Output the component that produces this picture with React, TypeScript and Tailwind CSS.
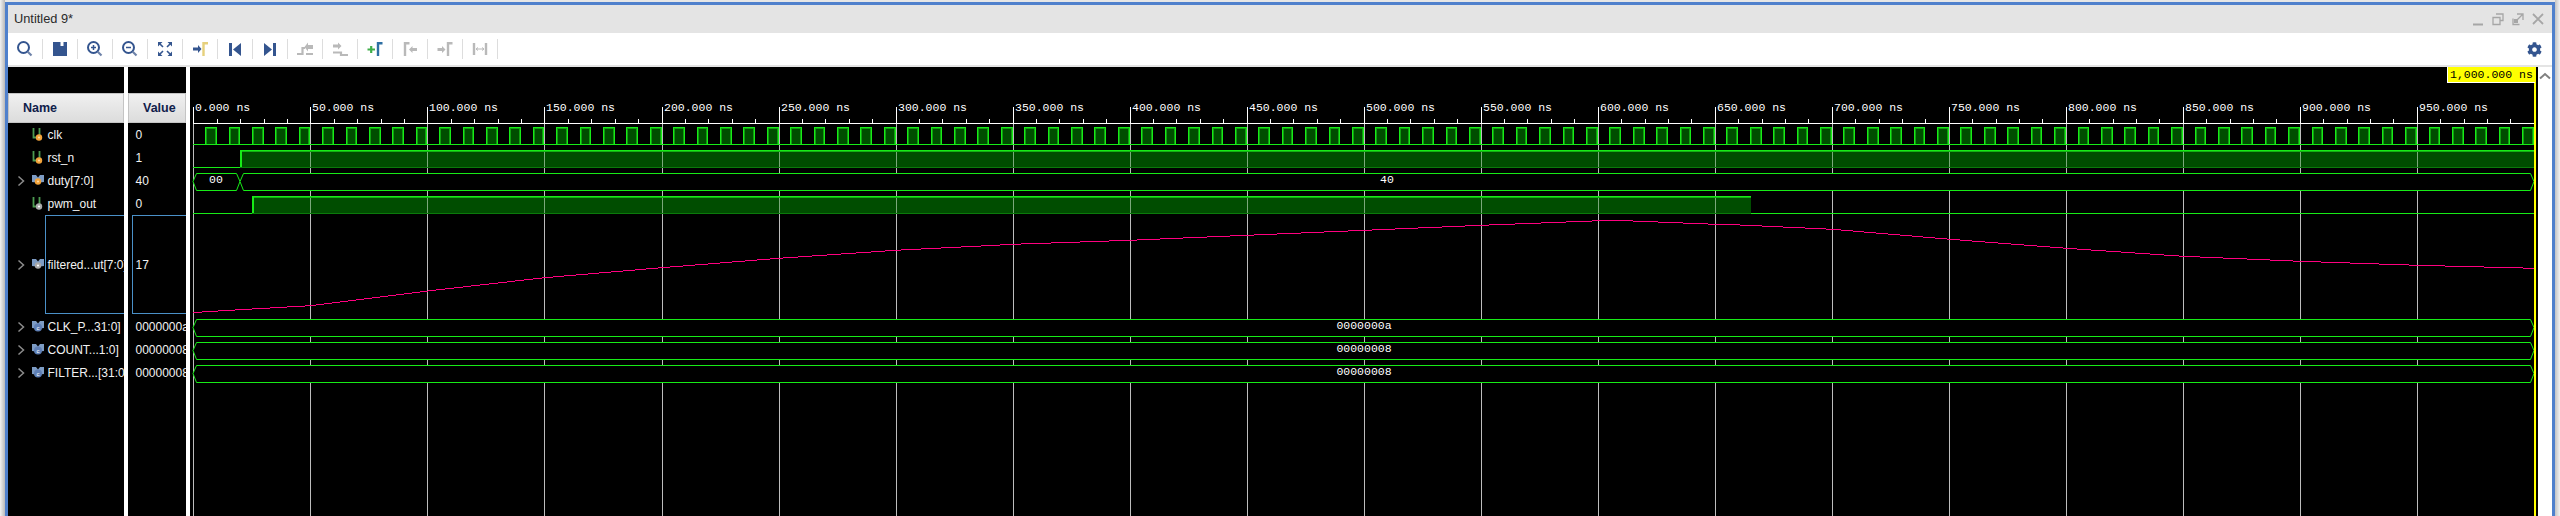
import React from "react";
import { FaCog } from "react-icons/fa";

const NAVY = "#34558f";
const OFF = "#b9b9b9";
const GREEN = "#17eb17";
const FILL = "#004d00";
const PINK = "#ff0080";

const X0 = 193.4;
const PX_PER_NS = 2.3405;
const END = 2534;
const nsX = (ns: number) => Math.round(X0 + ns * PX_PER_NS);

// measured off the reference, screen px
const trace: [number, number][] = [
  [193, 312.5], [246, 309.3], [310, 305.7], [427, 291], [544, 277.7], [661, 267.7],
  [778, 258.3], [895, 250.3], [990, 245.5], [1012, 244.3], [1129, 240.3], [1246, 235.3],
  [1364, 230.3], [1481, 225.3], [1599, 220.7], [1612, 220.3], [1625, 220.7], [1715, 224.3],
  [1740, 225], [1832, 229.3], [1950, 239.3], [2066, 248.3], [2183, 256.3], [2300, 261.3],
  [2417, 265.3], [2534, 268.3],
];

function traceRuns() {
  const runs: { x: number; w: number; y: number }[] = [];
  let seg = 0;
  for (let x = 193; x < END; x++) {
    while (seg < trace.length - 2 && x > trace[seg + 1][0]) seg++;
    const [ax, ay] = trace[seg];
    const [bx, by] = trace[seg + 1];
    const y = Math.round(ay + ((x - ax) / (bx - ax)) * (by - ay) - 0.5);
    const last = runs[runs.length - 1];
    if (last && last.y === y) last.w++;
    else runs.push({ x, w: 1, y });
  }
  return runs;
}

const Icon = ({ children }: { children: React.ReactNode }) => (
  <svg width="18" height="18" viewBox="0 0 18 18" fill="none">
    {children}
  </svg>
);

const Lens = ({ mark }: { mark?: "plus" | "minus" }) => (
  <Icon>
    <circle cx="7.5" cy="7.5" r="5.5" stroke={NAVY} strokeWidth="2" />
    <path d="M11.5 11.5 15.5 15.5" stroke="#6d82a8" strokeWidth="2.2" />
    {mark && <path d="M5 7.5H10" stroke={NAVY} strokeWidth="1.5" />}
    {mark === "plus" && <path d="M7.5 5V10" stroke={NAVY} strokeWidth="1.5" />}
  </Icon>
);

const toolbar: React.ReactNode[] = [
  <Lens />,
  <Icon>
    <path d="M2 2H9.5V6H12.5V2H16V16H2Z" fill={NAVY} />
  </Icon>,
  <Lens mark="plus" />,
  <Lens mark="minus" />,
  <Icon>
    <path d="M2 2H6.5L2 6.5ZM16 2V6.5L11.5 2ZM2 16V11.500L6.5 16ZM16 16H11.5L16 11.5Z" fill={NAVY} />
    <path d="M4 4 7 7M14 4 11 7M4 14 7 11M14 14 11 11" stroke={NAVY} strokeWidth="1.6" />
  </Icon>,
  <Icon>
    <path d="M2 7.500H7V5L10.500 9 7 13V10.500H2Z" fill={NAVY} />
    <path d="M12.500 16V3.200H17" stroke="#e6d07c" strokeWidth="2.400" />
  </Icon>,
  <Icon>
    <path d="M3 3H6V16H3ZM15 3V16L7 9.500Z" fill={NAVY} />
  </Icon>,
  <Icon>
    <path d="M12 3H15V16H12ZM3 3V16L11 9.500Z" fill={NAVY} />
  </Icon>,
  <Icon>
    <path d="M1 14H6.500V8H9" stroke={OFF} strokeWidth="2.200" />
    <path d="M17 5V9H12V11.500L8.500 7 12 2.500V5Z" fill={OFF} />
    <path d="M10 13H17V15H10Z" fill={OFF} />
  </Icon>,
  <Icon>
    <path d="M2 4.500H7V2.500L10.500 6 7 9.500V7.500H2Z" fill={OFF} />
    <path d="M2 12.500H10V15H17" stroke={OFF} strokeWidth="2.200" />
  </Icon>,
  <Icon>
    <path d="M1.500 9.500H9M5.200 6V13" stroke="#3fae49" strokeWidth="2.200" />
    <path d="M12 16V3.200H16.500" stroke="#2d6fa3" strokeWidth="2.400" />
  </Icon>,
  <Icon>
    <path d="M4 16V3.200H8.500" stroke={OFF} strokeWidth="2.400" />
    <path d="M16 8H11.500V6L8 9.500 11.500 13V11H16Z" fill={OFF} />
  </Icon>,
  <Icon>
    <path d="M1.500 8H6V6L9.500 9.500 6 13V11H1.500Z" fill={OFF} />
    <path d="M12 16V3.200H16.500" stroke={OFF} strokeWidth="2.400" />
  </Icon>,
  <Icon>
    <path d="M3 3V15M15 3V15" stroke={OFF} strokeWidth="2.400" />
    <path d="M5 9H13M5 9 7 7.500M5 9 7 10.500M13 9 11 7.500M13 9 11 10.500" stroke={OFF} strokeWidth="1" />
  </Icon>,
];

type Kind = "bit" | "bus" | "busOut" | "bitOut" | "const";

function SignalIcon({ kind }: { kind: Kind }) {
  const dot = kind === "bit" || kind === "bus" ? "#f2a33a" : kind === "const" ? "#5f7fb5" : "#a9a9a9";
  const isBit = kind === "bit" || kind === "bitOut";
  return (
    <svg className="shrink-0" width="14" height="16" viewBox="0 0 14 16" fill="none">
      {isBit ? (
        <path d="M2.500 1V10.500H8.500V1" stroke="#4c9a50" strokeWidth="1.800" />
      ) : (
        <path d="M1 2H5L7 4.500 9 2H13V9L9 9.500 7 7 5 9.500 1 9Z" fill="#7d9cc4" />
      )}
      <circle cx={isBit ? 8 : 7} cy={isBit ? 10.500 : 8.500} r={kind === "const" ? 4 : 3.200} fill={dot} />
      {kind === "const" ? (
        <text x="7" y="10.500" fontSize="6" fontFamily="Liberation Sans" fill="#fff" textAnchor="middle">
          c
        </text>
      ) : (
        <circle cx={isBit ? 8 : 7} cy={isBit ? 10.500 : 8.500} r="1.100" fill={kind === "bit" || kind === "bus" ? "#ffd9a0" : "#fff"} />
      )}
    </svg>
  );
}

const signals: { name: string; value: string; kind: Kind; bus?: boolean; tall?: boolean }[] = [
  { name: "clk", value: "0", kind: "bit" },
  { name: "rst_n", value: "1", kind: "bit" },
  { name: "duty[7:0]", value: "40", kind: "bus", bus: true },
  { name: "pwm_out", value: "0", kind: "bitOut" },
  { name: "filtered...ut[7:0]", value: "17", kind: "busOut", bus: true, tall: true },
  { name: "CLK_P...31:0]", value: "0000000a", kind: "const", bus: true },
  { name: "COUNT...1:0]", value: "00000008", kind: "const", bus: true },
  { name: "FILTER...[31:0]", value: "00000008", kind: "const", bus: true },
];

const HeaderCell = ({ label, className }: { label: string; className: string }) => (
  <div className={`h-[30px] flex items-center bg-gradient-to-b from-[#f0f0f0] to-[#dcdcdc] border border-[#c4c4c4] text-[12.5px] font-bold text-[#10204a] ${className}`}>
    {label}
  </div>
);

function Bus({ y, from, to, label, labelX }: { y: number; from: number; to: number; label?: string; labelX: number }) {
  const b = y + 17;
  const m = y + 8.5;
  return (
    <g>
      <path
        d={`M${from + 3.500} ${y + 0.5}H${to - 3.500}L${to} ${m}L${to - 3.500} ${b + 0.5}H${from + 3.500}L${from} ${m}Z`}
        fill="#000"
        stroke={GREEN}
        strokeWidth="1"
      />
      {label && (
        <text x={labelX} y={y + 10} fontSize="11.500" fontFamily="Liberation Mono" fill="#fff" textAnchor="middle">
          {label}
        </text>
      )}
    </g>
  );
}

function Level({ from, to, top, bottom, grid }: { from: number; to: number; top: number; bottom: number; grid: number[] }) {
  return (
    <g shapeRendering="crispEdges">
      <rect x={from} y={top} width={to - from} height={bottom - top} fill={FILL} />
      <rect x={from} y={top} width={to - from} height={2} fill={GREEN} />
      <rect x={from} y={top + 1} width={to - from} height={1} fill="#12b012" />
      <rect x={from} y={top} width={2} height={bottom - top} fill={GREEN} />
      <rect x={from} y={bottom - 1} width={to - from} height={1} fill="#0b7a0b" />
      {grid
        .filter((x) => x > from && x < to)
        .map((x) => (
          <rect key={x} x={x} y={top + 2} width={1} height={bottom - top - 3} fill="#7aa87a" />
        ))}
    </g>
  );
}

function Waves() {
  const majors = Array.from({ length: 20 }, (_, i) => i * 50);
  const minors = Array.from({ length: 100 }, (_, i) => i * 10).filter((n) => n % 50 !== 0);
  const grid = majors.map(nsX);
  const pulses = Array.from({ length: 100 }, (_, i) => 5 + i * 10);

  return (
    <svg className="absolute inset-0" width="2348" height="449" viewBox="190 67 2348 449" fontFamily="Liberation Mono">
      <g shapeRendering="crispEdges">
        {grid.map((x) => (
          <rect key={x} x={x} y={123} width={1} height={393} fill="#bdbdbd" />
        ))}
        <rect x={193} y={123} width={END - 193} height={1} fill="#fff" />
        {grid.map((x) => (
          <rect key={x} x={x} y={107} width={1} height={17} fill="#fff" />
        ))}
        {minors.map((n) => (
          <rect key={n} x={nsX(n)} y={119} width={1} height={4} fill="#fff" />
        ))}

        {/* clk */}
        <rect x={193} y={144} width={END - 193} height={1} fill={GREEN} />
      </g>
      {majors.map((n) => (
        <text key={n} x={nsX(n) + 2} y={110.500} fontSize="11.500" fill="#fff">
          {n === 0 ? "0.000 ns" : `${n}.000 ns`}
        </text>
      ))}
      <g shapeRendering="crispEdges">
        {pulses.map((n) => {
          const a = nsX(n);
          const b = nsX(n + 5);
          return (
            <g key={n}>
              <rect x={a} y={127} width={b - a} height={18} fill={GREEN} />
              <rect x={a + 1} y={128} width={b - a - 2} height={16} fill="#0f9f0f" />
              <rect x={a + 2} y={129} width={b - a - 4} height={15} fill={FILL} />
              <rect x={a} y={144} width={b - a} height={1} fill={GREEN} />
            </g>
          );
        })}

        {/* rst_n */}
        <rect x={193} y={167} width={47} height={1} fill={GREEN} />

        {/* pwm_out */}
        <rect x={193} y={213} width={59} height={1} fill={GREEN} />
        <rect x={1750} y={213} width={END - 1750} height={1} fill={GREEN} />
      </g>
      <Level from={240} to={END} top={150} bottom={168} grid={grid} />
      <Level from={252} to={1751} top={196} bottom={214} grid={grid} />

      {/* duty */}
      <Bus y={173} from={193} to={240} label="00" labelX={216} />
      <Bus y={173} from={240} to={END} label="40" labelX={1387} />

      {/* filtered_out */}
      <g shapeRendering="crispEdges">
        {traceRuns().map((r) => (
          <rect key={r.x} x={r.x} y={r.y} width={r.w} height={1} fill={PINK} />
        ))}
      </g>

      <Bus y={319} from={193} to={END} label="0000000a" labelX={1364} />
      <Bus y={342} from={193} to={END} label="00000008" labelX={1364} />
      <Bus y={365} from={193} to={END} label="00000008" labelX={1364} />

      <rect x={2534} y={67} width={2} height={449} fill="#ffff00" shapeRendering="crispEdges" />
    </svg>
  );
}

export default function App() {
  return (
    <div className="w-[2560px] h-[516px] flex overflow-hidden bg-[#e6e6e6] font-['Liberation_Sans',sans-serif]">
      <div className="w-[5px] bg-gradient-to-r from-[#f2f2f2] to-[#b9b9b9]" />

      <div className="w-[2550px] mt-[2px] border-x-[3px] border-t-[3px] border-[#4f80cc] flex flex-col">
        {/* title bar */}
        <div className="h-[28px] bg-[#e4e4e4] flex items-center justify-between pl-[6px] pr-[6px] text-[12.8px] text-[#2a2a2a]">
          <span>Untitled 9*</span>
          <div className="flex items-center gap-[4px]">
            <svg width="16" height="16" viewBox="0 0 16 16" fill="none" stroke="#a6a6a6" strokeWidth="1.500">
              <path d="M3 13.500H13" strokeWidth="2" />
            </svg>
            <svg width="16" height="16" viewBox="0 0 16 16" fill="none" stroke="#a6a6a6" strokeWidth="1.300">
              <path d="M6 3H13V9.500H10M3 6.500H10V13.500H3Z" />
            </svg>
            <svg width="16" height="16" viewBox="0 0 16 16" fill="none" stroke="#a6a6a6" strokeWidth="1.300">
              <path d="M7 3H13V9M13 3 7 9" />
              <path d="M3 7.500V13.500H9.500" />
              <path d="M4 8H8V12H4Z" fill="#a6a6a6" stroke="none" />
            </svg>
            <svg width="16" height="16" viewBox="0 0 16 16" fill="none" stroke="#a6a6a6" strokeWidth="1.800">
              <path d="M3 3 13 13M13 3 3 13" />
            </svg>
          </div>
        </div>

        {/* toolbar */}
        <div className="h-[32px] bg-white flex items-center justify-between">
          <div className="flex items-center">
            {toolbar.map((icon, i) => (
              <React.Fragment key={i}>
                <div className="w-[34px] flex justify-center">{icon}</div>
                <div className="w-px h-[20px] bg-[#dddddd]" />
              </React.Fragment>
            ))}
          </div>
          <div className="pr-[10px]">
            <FaCog size={15} color={NAVY} />
          </div>
        </div>
        <div className="h-[2px] bg-[#e4e4e4]" />

        {/* wave window */}
        <div className="flex-1 flex bg-white min-h-0">
          <div className="w-[116px] shrink-0 bg-black overflow-hidden">
            <div className="h-[26px]" />
            <HeaderCell label="Name" className="pl-[14px]" />
            {signals.map((s) => (
              <div key={s.name} className={`relative flex items-center text-[12px] text-[#f2f2f2] ${s.tall ? "h-[100px]" : "h-[23px]"}`}>
                {s.tall && <div className="absolute left-[37px] right-0 top-0 bottom-[1px] border-l border-y border-[#4a90c8]" />}
                <div className="w-[17px] shrink-0 flex justify-end">
                  {s.bus && (
                    <svg width="8" height="12" viewBox="0 0 8 12" fill="none" stroke="#8c8c8c" strokeWidth="1.500">
                      <path d="M1.500 1.500 6.500 6 1.500 10.500" />
                    </svg>
                  )}
                </div>
                <div className="ml-[6px] w-[14px] shrink-0 flex justify-center">
                  <SignalIcon kind={s.kind} />
                </div>
                <span className="ml-[2.500px] whitespace-nowrap">{s.name}</span>
              </div>
            ))}
          </div>
          <div className="w-[4px] shrink-0" />

          <div className="w-[58px] shrink-0 bg-black overflow-hidden">
            <div className="h-[26px]" />
            <HeaderCell label="Value" className="pl-[14px]" />
            {signals.map((s) => (
              <div key={s.name} className={`relative flex items-center pl-[7.500px] text-[12px] text-[#f2f2f2] whitespace-nowrap ${s.tall ? "h-[100px]" : "h-[23px]"}`}>
                {s.tall && <div className="absolute left-[4px] right-0 top-0 bottom-[1px] border-l border-y border-[#4a90c8]" />}
                {s.value}
              </div>
            ))}
          </div>
          <div className="w-[4px] shrink-0" />

          <div className="w-[2348px] shrink-0 relative bg-black">
            <Waves />
            <div className="absolute right-[3px] top-0 w-[88px] h-[16px] bg-[#ffff00] border-l border-b border-white flex items-center pl-[2px] font-['Liberation_Mono',monospace] text-[11.500px] text-black whitespace-nowrap">
              1,000.000 ns
            </div>
          </div>

          <div className="w-[14px] shrink-0 flex justify-center pt-[5px]">
            <svg className="block" width="12" height="8" viewBox="0 0 12 8" fill="none" stroke="#808080" strokeWidth="2">
              <path d="M1 6.500 6 2 11 6.500" />
            </svg>
          </div>
        </div>
      </div>

      <div className="w-[5px] bg-gradient-to-r from-[#c4c4c4] to-[#f2f2f2]" />
    </div>
  );
}
